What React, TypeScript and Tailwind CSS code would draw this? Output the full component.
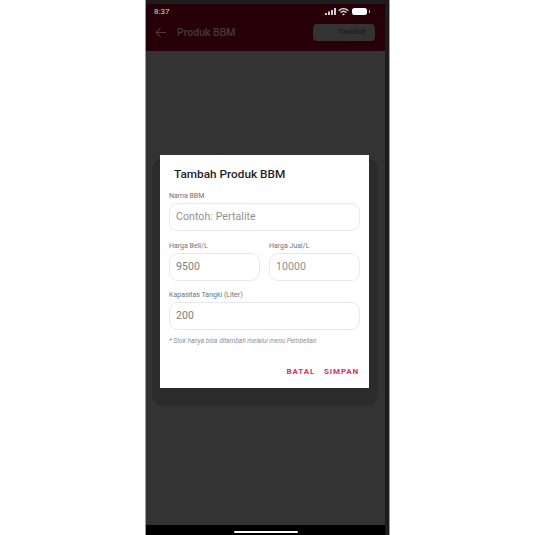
const font = { fontFamily: 'Roboto, sans-serif' };

function Field({ label, value, muted, className }: { label: string; value: string; muted?: boolean; className?: string }) {
  return (
    <div className={className}>
      <div className="text-[7px] leading-[9px] text-[#6b7280]">{label}</div>
      <div className="mt-[2px] flex h-[28px] items-center rounded-[9px] border border-[#e8e8f2] bg-white px-[6px] text-[10.5px] tracking-[0.1px]">
        <span className={muted ? 'text-[#8f8f8f]' : 'text-[#7d7d7d]'}>{value}</span>
      </div>
    </div>
  );
}

export default function App() {
  return (
    <div className="flex h-[535px] w-[535px] justify-start bg-white" style={font}>
      <div className="ml-[145px] flex h-[535px] w-[245px]">
        <div className="h-full w-[1px] bg-[#9a9a9a]" />
        <div className="relative flex h-full w-[239px] flex-col bg-[#333333]">
          <div className="h-[4px] bg-[#1c1c1c]" />
          <div className="flex h-[47px] flex-col bg-[#260006]">
            <div className="flex h-[15px] items-center justify-between pl-[8px] pr-[15px] text-[8px] text-[#d8d8d8]">
              <span>8:37</span>
              <span className="flex items-center gap-[2px]">
                <svg width="11" height="7" viewBox="0 0 11 7" fill="#d0d0d0"><rect x="0" y="5" width="2" height="2" /><rect x="3" y="3.5" width="2" height="3.5" /><rect x="6" y="2" width="2" height="5" /><rect x="9" y="0" width="2" height="7" /></svg>
                <svg width="11" height="8" viewBox="0 0 11 8" fill="none" stroke="#e0e0e0" strokeWidth="1.3"><path d="M0.7 2.8C3.5 0 7.5 0 10.3 2.8" /><path d="M2.5 4.6C4.2 3.1 6.8 3.1 8.5 4.6" /><path d="M5.5 7.6 L4 6 C5 5.3 6 5.3 7 6 Z" fill="#e0e0e0" stroke="none" /></svg>
                <span className="ml-[1px] h-[7px] w-[15px] rounded-[2.5px] bg-white" />
                <span className="h-[3px] w-[1px] bg-[#bbbbbb]" />
              </span>
            </div>
            <div className="flex flex-1 items-center pb-[5px] pl-[9px] pr-[10px]">
              <svg width="12" height="11" viewBox="0 0 13 12" fill="none" stroke="#4a3a3d" strokeWidth="1.1"><path d="M12 6H1.5M6 1.2 1.2 6 6 10.8" /></svg>
              <span className="ml-[10px] flex-1 text-[10.5px] font-medium text-[#453b3f]">Produk BBM</span>
              <div className="flex h-[17px] w-[62px] items-center justify-end rounded-[4px] bg-[#333333] pr-[8px] text-[7px] font-medium tracking-[0.5px] text-[#1a1a1a]">Tambah</div>
            </div>
          </div>
          <div className="flex-1" />
          <div className="h-[10px] bg-black">
            <div className="mx-auto mt-[6px] h-[2px] w-[64px] rounded-full bg-white" />
          </div>
          <div className="absolute left-[6px] top-[158px] h-[248px] w-[226px] rounded-[12px] bg-[#2b2b2b]" />
          <div className="absolute left-[14px] top-[155px] w-[209px] bg-white px-[9px] pb-[11px] pt-[12px]">
            <div className="pl-[5px] text-[11.8px] font-medium leading-[15px] text-[#1f1f1f]">Tambah Produk BBM</div>
            <Field className="mt-[10px]" label="Nama BBM" value="Contoh: Pertalite" muted />
            <div className="mt-[11px] flex gap-[9px]">
              <Field className="flex-1" label="Harga Beli/L" value="9500" />
              <Field className="flex-1" label="Harga Jual/L" value="10000" muted />
            </div>
            <Field className="mt-[10px]" label="Kapasitas Tangki (Liter)" value="200" />
            <div className="mt-[7px] text-[6.5px] italic leading-[9px] text-[#8a8f98]">* Stok hanya bisa ditambah melalui menu Pembelian</div>
            <div className="mt-[21px] flex justify-end gap-[9px] pr-[1px] text-[8px] font-bold leading-[10px] tracking-[0.85px] text-[#d9305a]">
              <span>BATAL</span>
              <span>SIMPAN</span>
            </div>
          </div>
        </div>
        <div className="h-full w-[4px] bg-[#1c1c1c]" />
        <div className="h-full w-[1px] bg-[#9a9a9a]" />
      </div>
    </div>
  );
}
